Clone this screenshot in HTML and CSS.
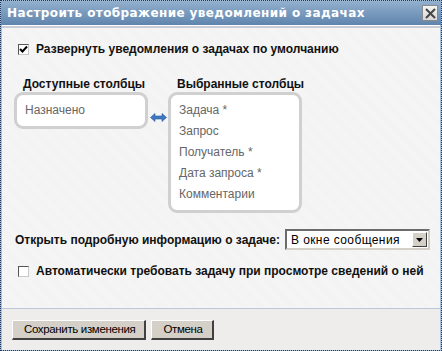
FILE: index.html
```html
<html>
<head>
<title>Настроить отображение уведомлений о задачах</title>
<link rel="stylesheet" href="styles.css">
</head>
<body>
<div class="dialog">
	<div class="titlebar">
		<span class="title">Настроить отображение уведомлений о задачах</span>
		<span class="close">
			<svg width="11" height="11" viewBox="0 0 11 11"><path d="M1 1 L10 10 M10 1 L1 10" stroke="#444" stroke-width="2"/></svg>
		</span>
	</div>
	<div class="content">
		<label class="check-row first">
			<span class="checkbox checked">
				<svg width="9" height="9" viewBox="0 0 9 9"><path d="M1 4 L3.5 6.5 L8 1.5" stroke="#000" stroke-width="2" fill="none"/></svg>
			</span>
			Развернуть уведомления о задачах по умолчанию
		</label>

		<div class="columns">
			<div class="column">
				<div class="col-head">Доступные столбцы</div>
				<div class="listbox small">
					<div class="item">Назначено</div>
				</div>
			</div>
			<div class="swap">
				<svg width="17" height="9" viewBox="0 0 17 9">
					<path d="M0.5 4.5 L5 0.5 L5 3 L12 3 L12 0.5 L16.5 4.5 L12 8.5 L12 6 L5 6 L5 8.5 Z" fill="#3f78c2" stroke="#2a5a9a" stroke-width="0.6"/>
				</svg>
			</div>
			<div class="column">
				<div class="col-head">Выбранные столбцы</div>
				<div class="listbox big">
					<div class="item">Задача *</div>
					<div class="item">Запрос</div>
					<div class="item">Получатель *</div>
					<div class="item">Дата запроса *</div>
					<div class="item">Комментарии</div>
				</div>
			</div>
		</div>

		<div class="open-row">
			<span class="label">Открыть подробную информацию о задаче:</span>
			<span class="select">
				<span class="select-text">В окне сообщения</span>
				<span class="select-btn">
					<svg width="7" height="4" viewBox="0 0 7 4"><path d="M0 0 L7 0 L3.5 4 Z" fill="#000"/></svg>
				</span>
			</span>
		</div>

		<label class="check-row">
			<span class="checkbox"></span>
			Автоматически требовать задачу при просмотре сведений о ней
		</label>
	</div>
	<div class="footer">
		<span class="button">Сохранить изменения</span>
		<span class="button">Отмена</span>
	</div>
</div>
</body>
</html>
```

FILE: styles.css
```css
body{
	margin:0;
	background-color:#ffffff;
	font-family:"Liberation Sans", Arial, sans-serif;
	font-size:12px;
}
.dialog{
	width:440px;
	height:349px;
	border:1px dotted #1d3360;
	background-color:#a8bfd8;
	display:flex;
	flex-direction:column;
}
.titlebar{
	height:24px;
	flex:none;
	display:flex;
	align-items:center;
	justify-content:space-between;
	padding:0 3px 0 6px;
	background:linear-gradient(#93b0ce, #5f84ad);
}
.title{
	color:#ffffff;
	font-family:"DejaVu Sans", Verdana, sans-serif;
	font-weight:bold;
	font-size:12px;
	letter-spacing:0.4px;
}
.close{
	width:16px;
	height:16px;
	box-sizing:border-box;
	border:1px solid #8a8a8a;
	background:linear-gradient(#f4f4f4, #d6d6d6);
	display:flex;
	align-items:center;
	justify-content:center;
}
.content{
	flex:1;
	margin:0 1px;
	border-top:1px solid #ffffff;
	box-shadow:inset 0 2px 0 #c9ccd3;
	background-color:#f4f4f4;
	background-image:repeating-linear-gradient(45deg, #f6f6f6 0 1px, #f2f2f2 1px 2px);
	padding:2px 0 0 12px;
}
.check-row{
	display:flex;
	align-items:center;
	font-weight:bold;
	color:#111;
	padding-left:4px;
	height:18px;
}
.check-row.first{
	margin-top:12px;
}
.checkbox{
	width:11px;
	height:11px;
	box-sizing:border-box;
	border:1px solid #555;
	border-right-color:#c8c8c8;
	border-bottom-color:#c8c8c8;
	background-color:#ffffff;
	margin-right:7px;
	display:flex;
	align-items:center;
	justify-content:center;
}
.columns{
	display:flex;
	align-items:flex-start;
	margin-top:19px;
}
.col-head{
	font-weight:bold;
	color:#111;
	padding-left:9px;
	height:15px;
}
.listbox{
	width:134px;
	box-sizing:border-box;
	border:3px solid #d0d0d0;
	border-radius:9px;
	background-color:#ffffff;
	padding:5px 0 0 8px;
}
.listbox.small{
	height:37px;
}
.listbox.big{
	height:121px;
}
.item{
	color:#666666;
	height:21px;
	line-height:20px;
}
.swap{
	width:20px;
	display:flex;
	justify-content:center;
	margin-top:36px;
}
.open-row{
	display:flex;
	align-items:center;
	margin-top:16px;
	padding-left:1px;
}
.label{
	font-weight:bold;
	color:#111;
	width:270px;
}
.select{
	width:145px;
	height:21px;
	box-sizing:border-box;
	border:2px solid #6b6b6b;
	border-right-color:#d4d0c8;
	border-bottom-color:#d4d0c8;
	background-color:#ffffff;
	display:flex;
	align-items:center;
	justify-content:space-between;
	padding-left:4px;
}
.select-text{
	color:#000;
	font-size:12px;
	letter-spacing:0.4px;
}
.select-btn{
	width:15px;
	height:15px;
	box-sizing:border-box;
	border:1px solid #fff;
	border-right-color:#404040;
	border-bottom-color:#404040;
	background-color:#d4d0c8;
	display:flex;
	align-items:center;
	justify-content:center;
	margin-right:1px;
}
.open-row + .check-row{
	margin-top:12px;
}
.footer{
	height:41px;
	flex:none;
	margin:0 1px;
	border-top:1px solid #b9c9da;
	background-color:#eeedeb;
	display:flex;
	align-items:center;
	padding-left:10px;
	gap:5px;
}
.button{
	height:20px;
	box-sizing:border-box;
	border:1px solid #ffffff;
	border-right:2px solid #404040;
	border-bottom:2px solid #404040;
	background-color:#d4d0c8;
	color:#000;
	padding:0 9px 0 11px;
	display:flex;
	align-items:center;
	font-size:11.5px;
	letter-spacing:-0.35px;
}
```
